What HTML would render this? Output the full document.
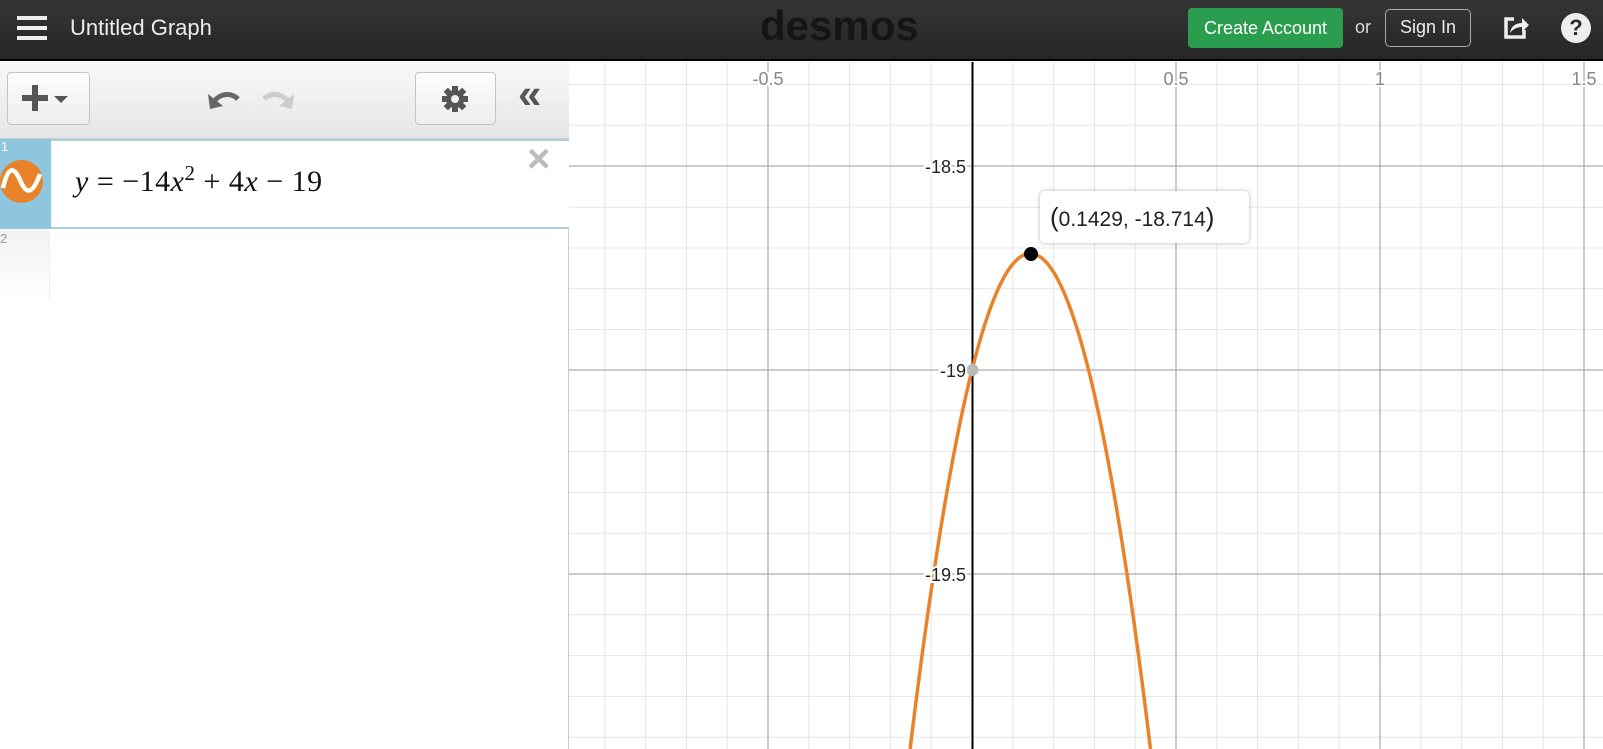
<!DOCTYPE html>
<html><head><meta charset="utf-8"><style>
*{margin:0;padding:0;box-sizing:border-box}
body{width:1603px;height:749px;overflow:hidden;position:relative;font-family:"Liberation Sans",Arial,sans-serif;background:#fff}
#hdr{position:absolute;left:0;top:0;width:1603px;height:61px;background:linear-gradient(#353535,#262626);border-bottom:2px solid #000}
.abs{position:absolute}
#panel{position:absolute;left:0;top:62px;width:569px;height:687px;background:#fff;border-right:1px solid #ccc}
#tb{position:absolute;left:0;top:0;width:569px;height:77px;background:linear-gradient(#f8f8f8,#e6e6e6);border-bottom:1px solid #ccc}
.btn{position:absolute;border:1px solid #c4c4c4;border-radius:4px;background:linear-gradient(#fdfdfd,#ededed)}
</style></head><body>
<svg class="abs" style="left:0;top:0" width="1603" height="749" id="g">
<g stroke="#e6e6e6" stroke-width="1">
<line x1="564.0" y1="62" x2="564.0" y2="749"/><line x1="604.8" y1="62" x2="604.8" y2="749"/><line x1="645.6" y1="62" x2="645.6" y2="749"/><line x1="686.4" y1="62" x2="686.4" y2="749"/><line x1="727.2" y1="62" x2="727.2" y2="749"/><line x1="808.8" y1="62" x2="808.8" y2="749"/><line x1="849.6" y1="62" x2="849.6" y2="749"/><line x1="890.4" y1="62" x2="890.4" y2="749"/><line x1="931.2" y1="62" x2="931.2" y2="749"/><line x1="1012.8" y1="62" x2="1012.8" y2="749"/><line x1="1053.6" y1="62" x2="1053.6" y2="749"/><line x1="1094.4" y1="62" x2="1094.4" y2="749"/><line x1="1135.2" y1="62" x2="1135.2" y2="749"/><line x1="1216.8" y1="62" x2="1216.8" y2="749"/><line x1="1257.6" y1="62" x2="1257.6" y2="749"/><line x1="1298.4" y1="62" x2="1298.4" y2="749"/><line x1="1339.2" y1="62" x2="1339.2" y2="749"/><line x1="1420.8" y1="62" x2="1420.8" y2="749"/><line x1="1461.6" y1="62" x2="1461.6" y2="749"/><line x1="1502.4" y1="62" x2="1502.4" y2="749"/><line x1="1543.2" y1="62" x2="1543.2" y2="749"/>
<line x1="556" y1="84.4" x2="1603" y2="84.4"/><line x1="556" y1="125.2" x2="1603" y2="125.2"/><line x1="556" y1="207.2" x2="1603" y2="207.2"/><line x1="556" y1="248" x2="1603" y2="248"/><line x1="556" y1="288.8" x2="1603" y2="288.8"/><line x1="556" y1="329.6" x2="1603" y2="329.6"/><line x1="556" y1="410.8" x2="1603" y2="410.8"/><line x1="556" y1="451.6" x2="1603" y2="451.6"/><line x1="556" y1="492.4" x2="1603" y2="492.4"/><line x1="556" y1="533.2" x2="1603" y2="533.2"/><line x1="556" y1="614.8" x2="1603" y2="614.8"/><line x1="556" y1="655.6" x2="1603" y2="655.6"/><line x1="556" y1="696.4" x2="1603" y2="696.4"/><line x1="556" y1="737.2" x2="1603" y2="737.2"/>
</g>
<g stroke="#9a9a9a" stroke-width="1">
<line x1="768" y1="62" x2="768" y2="749"/><line x1="1176" y1="62" x2="1176" y2="749"/><line x1="1380" y1="62" x2="1380" y2="749"/><line x1="1584" y1="62" x2="1584" y2="749"/>
<line x1="556" y1="166" x2="1603" y2="166"/><line x1="556" y1="370" x2="1603" y2="370"/><line x1="556" y1="574" x2="1603" y2="574"/>
</g>
<line x1="972.5" y1="62" x2="972.5" y2="749" stroke="#000" stroke-width="2"/>
<path d="M910.1 749 Q1030.3 -242 1150.5 749" fill="none" stroke="#e8832a" stroke-width="3.5"/>
<circle cx="972.5" cy="370" r="6" fill="#bbb"/>
<circle cx="1031" cy="254" r="7" fill="#000"/>
<g font-family="Liberation Sans,Arial,sans-serif" font-size="18">
<g fill="#888" text-anchor="middle">
<text x="768" y="85" stroke="#fff" stroke-width="4" paint-order="stroke">-0.5</text>
<text x="1176" y="85" stroke="#fff" stroke-width="4" paint-order="stroke">0.5</text>
<text x="1380" y="85" stroke="#fff" stroke-width="4" paint-order="stroke">1</text>
<text x="1584" y="85" stroke="#fff" stroke-width="4" paint-order="stroke">1.5</text>
</g>
<g fill="#222" text-anchor="end">
<text x="966" y="173" stroke="#fff" stroke-width="4" paint-order="stroke">-18.5</text>
<text x="966" y="377" stroke="#fff" stroke-width="4" paint-order="stroke">-19</text>
<text x="966" y="581" stroke="#fff" stroke-width="4" paint-order="stroke">-19.5</text>
</g>
</g>
</svg>
<div class="abs" style="left:1040px;top:191px;width:209px;height:52px;background:#fff;border-radius:5px;box-shadow:0 0 4px rgba(0,0,0,.3);font-size:21px;color:#222;line-height:52px;padding-left:10px"><span style="font-size:26px">(</span>0.1429, -18.714<span style="font-size:26px">)</span></div>

<div id="hdr">
<div class="abs" style="left:17px;top:16px;width:30px;height:4px;background:#eee;box-shadow:0 10px 0 #eee,0 20px 0 #eee"></div>
<div class="abs" style="left:70px;top:15px;font-size:22px;color:#eee">Untitled Graph</div>
<div class="abs" style="left:760px;top:2px;font-size:42px;color:#151515;font-weight:bold;letter-spacing:0px">desmos</div>
<div class="abs" style="left:1188px;top:8px;width:155px;height:40px;background:#2a9d4f;border-radius:4px;color:#fff;font-size:18px;line-height:40px;text-align:center">Create Account</div>
<div class="abs" style="left:1355px;top:17px;font-size:18px;color:#ddd">or</div>
<div class="abs" style="left:1385px;top:9px;width:86px;height:38px;border:1.5px solid #aaa;border-radius:5px;color:#eee;font-size:18px;line-height:35px;text-align:center">Sign In</div>
<svg class="abs" style="left:1502px;top:14px" width="30" height="28" viewBox="0 0 30 28"><path d="M12 5H4v18h18v-7" fill="none" stroke="#eee" stroke-width="3.5"/><path d="M8 19c1-7 6-10 12-10V4l7 7-7 7v-5c-5 0-9 2-12 6z" fill="#eee"/></svg>
<div class="abs" style="left:1561px;top:13px;width:30px;height:30px;border-radius:50%;background:#eee;color:#2a2a2a;font-weight:bold;font-size:22px;text-align:center;line-height:30px">?</div>
</div>

<div id="panel">
<div id="tb">
<div class="btn" style="left:7px;top:10px;width:83px;height:53px"></div>
<div class="abs" style="left:22px;top:33px;width:26px;height:6px;background:#555"></div>
<div class="abs" style="left:32px;top:23px;width:6px;height:26px;background:#555"></div>
<div class="abs" style="left:54px;top:34px;border-left:7px solid transparent;border-right:7px solid transparent;border-top:7px solid #555"></div>
<svg class="abs" style="left:206px;top:22px" width="90" height="30" viewBox="0 0 90 30"><path d="M6 22C10 10 24 7 32 15" fill="none" stroke="#666" stroke-width="5"/><path d="M2 10l2 15 13-3z" fill="#666"/><path d="M84 22C80 10 66 7 58 15" fill="none" stroke="#ccc" stroke-width="5"/><path d="M88 10l-2 15-13-3z" fill="#ccc"/></svg>
<div class="btn" style="left:415px;top:10px;width:81px;height:53px"></div>
<svg class="abs" style="left:441px;top:23px" width="28" height="28" viewBox="-14 -14 28 28"><g fill="#555"><circle r="9"/><rect x="-3" y="-13" width="6" height="26"/><rect x="-3" y="-13" width="6" height="26" transform="rotate(45)"/><rect x="-3" y="-13" width="6" height="26" transform="rotate(90)"/><rect x="-3" y="-13" width="6" height="26" transform="rotate(135)"/></g><circle r="4" fill="#f0f0f0"/></svg>
<div class="abs" style="left:518px;top:8px;font-size:42px;color:#555;font-weight:bold">«</div>
</div>
<div class="abs" style="left:0;top:77px;width:569px;height:90px;border-top:2px solid #a9cfe0;border-bottom:2px solid #a9cfe0;background:#fff"></div>
<div class="abs" style="left:0;top:77px;width:51px;height:90px;background:#8ec5df"></div>
<div class="abs" style="left:1px;top:77px;font-size:13px;color:#fff">1</div>
<div class="abs" style="left:0;top:98px;width:43px;height:43px;border-radius:50%;background:#e8832a"></div>
<svg class="abs" style="left:0;top:98px" width="43" height="43"><path d="M3 28C8 6 14 6 20 20S32 36 40 14" fill="none" stroke="#fff" stroke-width="4.5"/></svg>
<div class="abs" style="left:75px;top:99px;font-family:'Liberation Serif',serif;font-size:30px;color:#111;letter-spacing:0.5px"><i>y</i> = −14<i>x</i><sup style="font-size:21px">2</sup> + 4<i>x</i> − 19</div>
<div class="abs" style="left:527px;top:75px;font-size:40px;color:#bbb;font-weight:bold">×</div>
<div class="abs" style="left:0;top:169px;width:50px;height:70px;background:linear-gradient(#f2f2f2,#fff);border-right:1px solid #eee"></div>
<div class="abs" style="left:0;top:169px;font-size:13px;color:#999">2</div>
</div>
</body></html>
